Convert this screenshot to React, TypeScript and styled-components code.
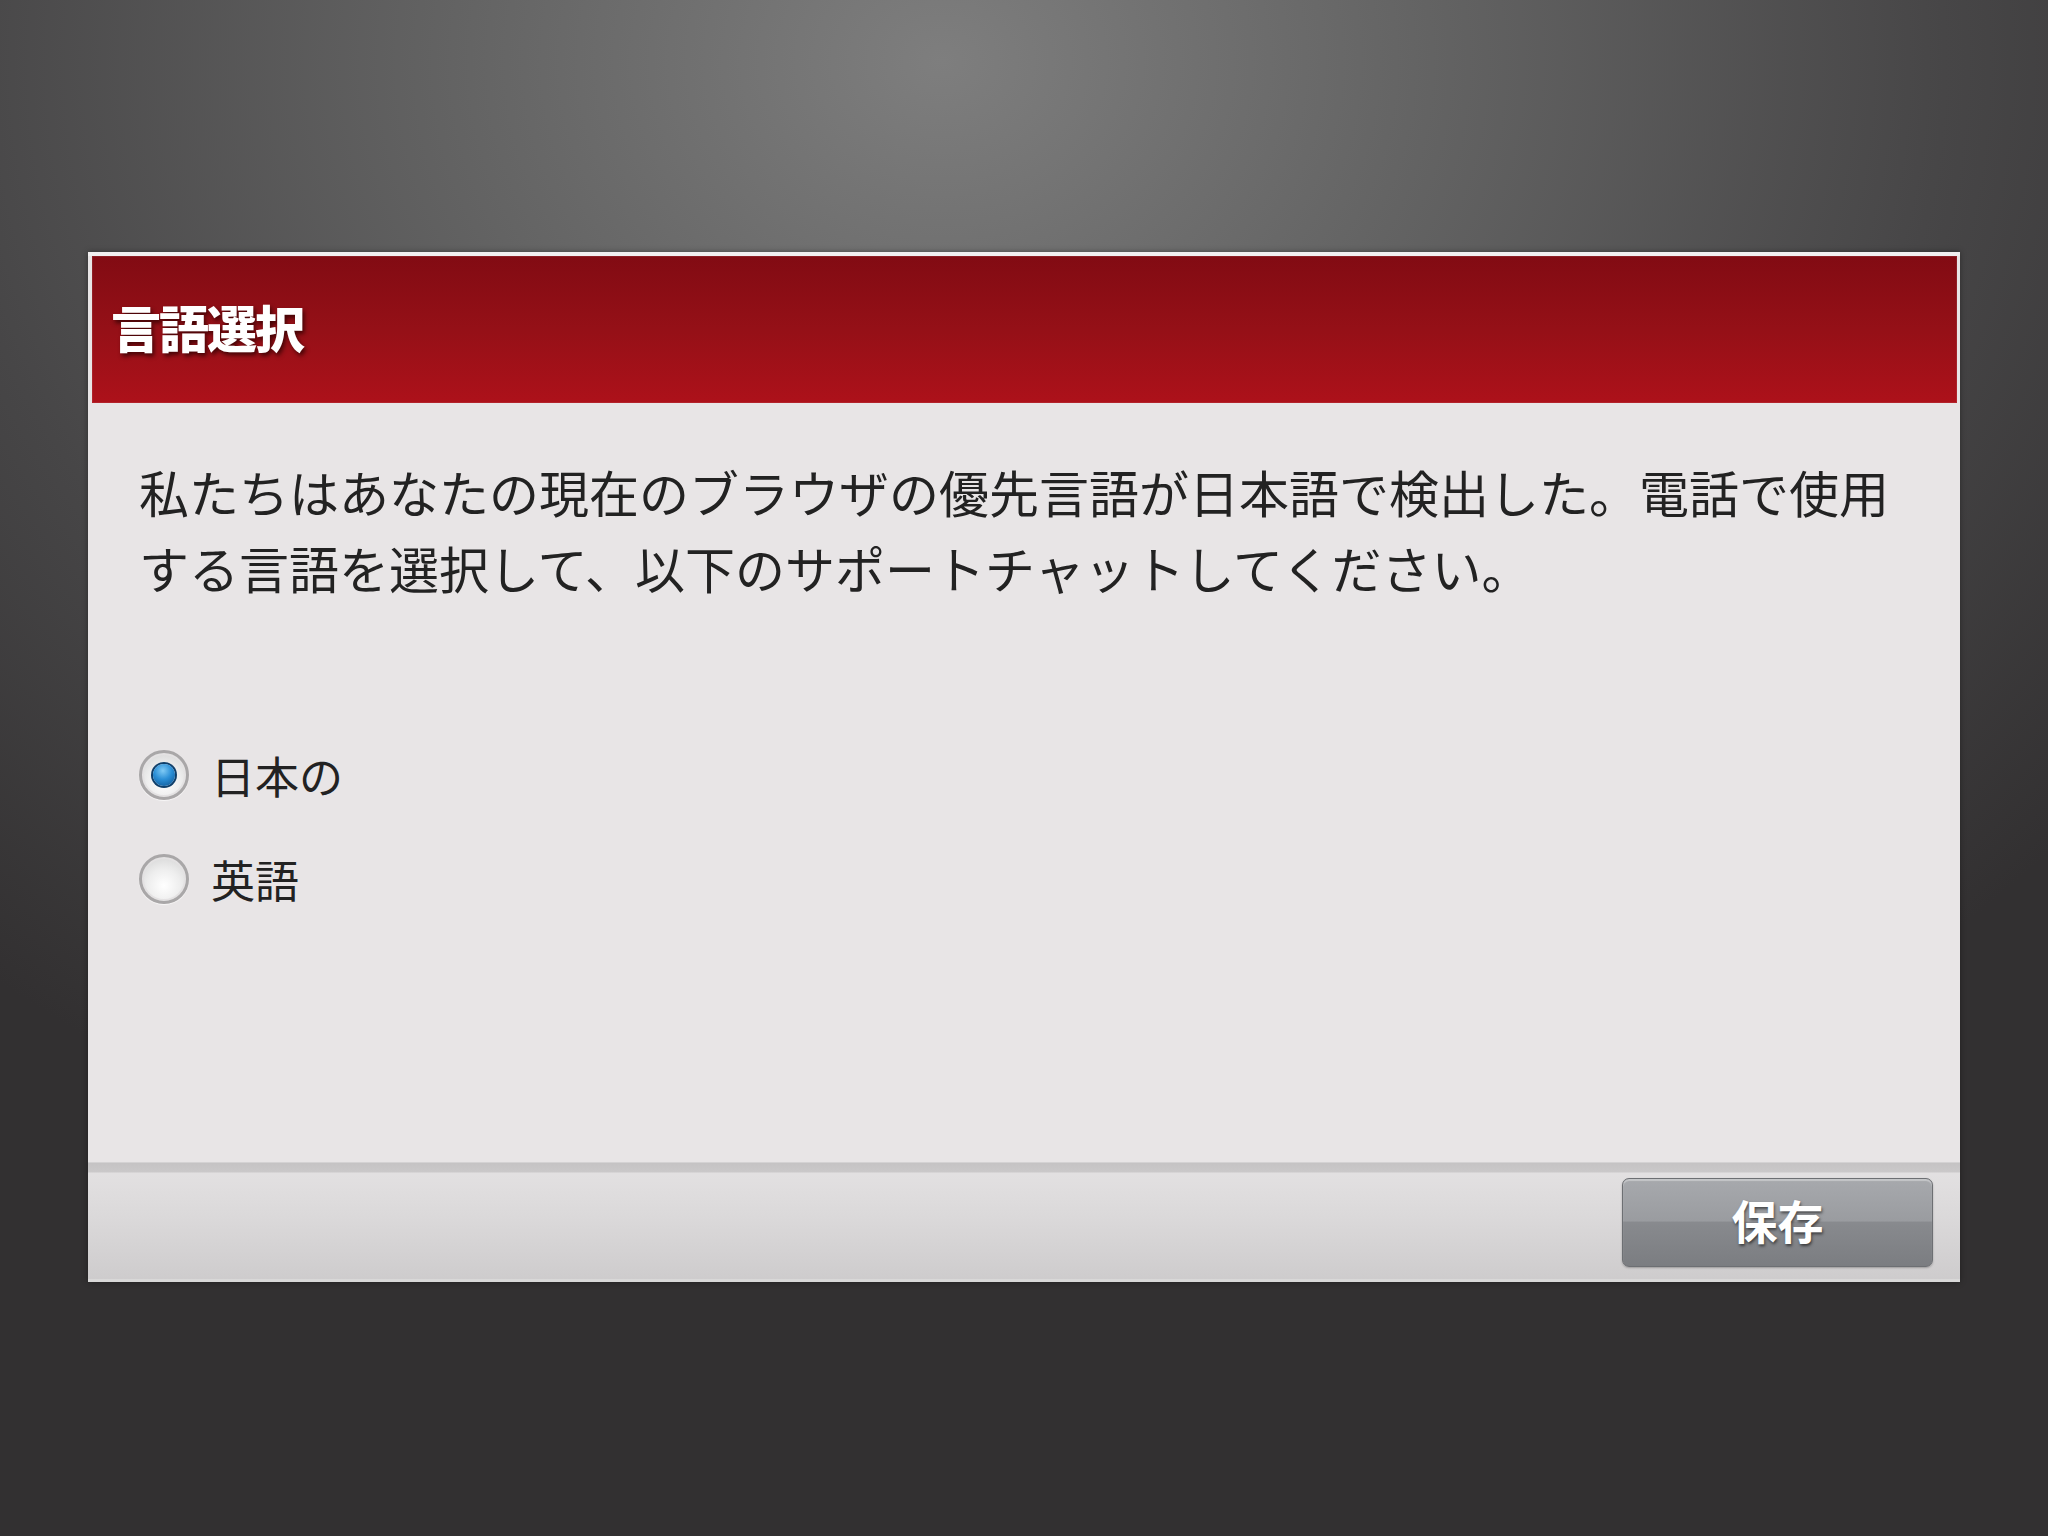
import React, { FunctionComponent, useState } from "react";
import styled, { createGlobalStyle } from "styled-components";

const GlobalStyle = createGlobalStyle`
  html, body {
    margin: 0;
    padding: 0;
    height: 100%;
  }
  body {
    font-family: "Noto Sans CJK JP", "Noto Sans", sans-serif;
  }
`;

type Lang = "ja" | "en";

const options: { id: Lang; label: string }[] = [
  { id: "ja", label: "日本の" },
  { id: "en", label: "英語" },
];

const App: FunctionComponent = () => {
  const [lang, setLang] = useState<Lang>("ja");

  return (
    <>
      <GlobalStyle />
      <Page>
        <Dialog>
          <Header>
            <Title>言語選択</Title>
          </Header>
          <Body>
            <Message>
              私たちはあなたの現在のブラウザの優先言語が日本語で検出した。電話で使用する言語を選択して、以下のサポートチャットしてください。
            </Message>
            <OptionList>
              {options.map((o) => (
                <OptionRow key={o.id} onClick={() => setLang(o.id)}>
                  <Radio $checked={lang === o.id} />
                  <OptionLabel>{o.label}</OptionLabel>
                </OptionRow>
              ))}
            </OptionList>
          </Body>
          <Footer>
            <SaveButton type="button">保存</SaveButton>
          </Footer>
        </Dialog>
      </Page>
    </>
  );
};

export default App;

const Page = styled("div")`
  box-sizing: border-box;
  width: 2048px;
  height: 1536px;
  padding: 252px 0 0 88px;
  background-color: #302e2f;
  background-image: radial-gradient(
    ellipse 72% 78% at 46% 4%,
    #7e7e7e 0%,
    #646464 32%,
    #474647 68%,
    #323031 100%
  );
  overflow: hidden;
`;

const Dialog = styled("div")`
  width: 1872px;
  display: flex;
  flex-direction: column;
  background: #e8e5e6;
  border-top: 4px solid #f1eff0;
  box-shadow: 0 0 6px rgba(0, 0, 0, 0.35);
`;

const Header = styled("div")`
  height: 147px;
  box-sizing: border-box;
  margin: 0 3px 0 4px;
  display: flex;
  align-items: center;
  padding: 0 0 8px 19px;
  background: linear-gradient(to bottom, #820b13 0%, #951017 50%, #ad111a 100%);
  box-shadow: inset 0 0 0 1px rgba(255, 255, 255, 0.08);
`;

const Title = styled("h1")`
  margin: 0;
  font-size: 50px;
  line-height: 1;
  font-weight: 900;
  color: #ffffff;
  letter-spacing: -2px;
  text-shadow: 2px 3px 4px rgba(40, 0, 0, 0.75);
`;

const Body = styled("div")`
  height: 759px;
  box-sizing: border-box;
  padding: 50px 50px 0 51px;
  display: flex;
  flex-direction: column;
`;

const Message = styled("p")`
  margin: 0;
  width: 1770px;
  font-size: 50px;
  line-height: 76px;
  color: #222222;
  font-weight: 400;
`;

const OptionList = styled("div")`
  margin-top: 140px;
  display: flex;
  flex-direction: column;
  gap: 44px;
`;

const OptionRow = styled("label")`
  height: 60px;
  display: flex;
  align-items: center;
  gap: 22px;
  cursor: pointer;
`;

const Radio = styled("span")<{ $checked: boolean }>`
  position: relative;
  box-sizing: border-box;
  width: 50px;
  height: 50px;
  border-radius: 50%;
  border: 3px solid #a9a7a8;
  background: radial-gradient(circle at 50% 65%, #ffffff 0%, #eeeeee 45%, #cfcfcf 100%);
  box-shadow: inset 0 0 0 2px #e4e2e3, 0 1px 1px rgba(255, 255, 255, 0.7);

  &::after {
    content: "";
    display: ${(p) => (p.$checked ? "block" : "none")};
    position: absolute;
    left: 50%;
    top: 50%;
    width: 22px;
    height: 22px;
    margin: -11px 0 0 -11px;
    border-radius: 50%;
    background: radial-gradient(circle at 45% 30%, #7fcaf5 0%, #2b8fd6 45%, #0b4f8c 100%);
    box-shadow: 0 0 0 2px #0f3f6a;
  }
`;

const OptionLabel = styled("span")`
  font-size: 44px;
  line-height: 60px;
  color: #222222;
`;

const Footer = styled("div")`
  height: 120px;
  box-sizing: border-box;
  display: flex;
  align-items: center;
  justify-content: flex-end;
  padding: 10px 27px 8px 0;
  border-top: 1px solid #d4d2d3;
  background:
    linear-gradient(to bottom, #c5c3c4 0px, #cac8c9 9px, transparent 10px),
    linear-gradient(to bottom, #e4e2e3 0%, #dad8d9 50%, #cecccd 100%);
  border-bottom: 3px solid #d9d8d8;
`;

const SaveButton = styled("button")`
  width: 311px;
  height: 89px;
  border: 1px solid #6d6f73;
  border-radius: 7px;
  background: linear-gradient(
    to bottom,
    #a7a9ad 0%,
    #9a9ca0 48%,
    #888a8e 50%,
    #7b7d81 100%
  );
  box-shadow: inset 0 2px 1px rgba(255, 255, 255, 0.35), 0 1px 2px rgba(0, 0, 0, 0.25);
  color: #ffffff;
  font-family: "Noto Sans CJK JP", "Noto Sans", sans-serif;
  font-size: 46px;
  font-weight: 700;
  line-height: 1;
  padding: 0 0 6px;
  text-shadow: 1px 2px 3px rgba(0, 0, 0, 0.55);
  cursor: pointer;
`;
